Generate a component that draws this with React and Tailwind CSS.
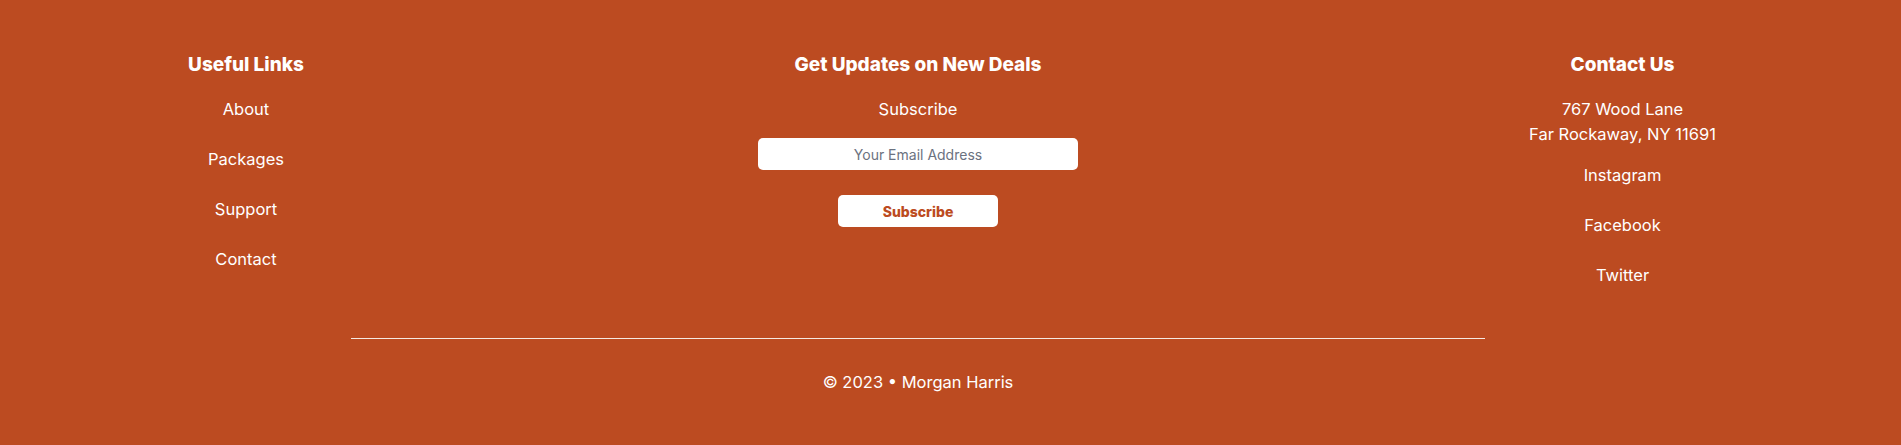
import React from "react";

const usefulLinks = ["About", "Packages", "Support", "Contact"];
const socialLinks = ["Instagram", "Facebook", "Twitter"];

export default function App() {
  return (
    <footer
      className="w-full min-h-[445px] bg-[#bc4b21] text-white pt-[50px] pb-[46px]"
      style={{ fontFamily: "Inter, 'Open Sans', sans-serif" }}
    >
      <div className="grid grid-cols-[492px_852px_557px]">
        {/* Useful links */}
        <div className="flex flex-col items-center">
          <h3 className="text-[19px] leading-[30px] font-extrabold">Useful Links</h3>
          <ul className="mt-[15px] flex flex-col items-center gap-[22px]">
            {usefulLinks.map((l) => (
              <li key={l} className="text-[16.5px] leading-[28px]">
                <a href="#">{l}</a>
              </li>
            ))}
          </ul>
        </div>

        {/* Newsletter */}
        <div className="flex flex-col items-center">
          <h3 className="text-[19px] leading-[30px] font-extrabold">Get Updates on New Deals</h3>
          <p className="mt-[15px] text-[16.5px] leading-[28px]">Subscribe</p>
          <input
            type="email"
            placeholder="Your Email Address"
            className="mt-[15px] h-[32px] w-[320px] rounded-[5px] bg-white text-center text-[14px] text-gray-700 placeholder:text-[#6b7280] outline-none"
          />
          <button className="mt-[25px] h-[32px] w-[160px] rounded-[5px] bg-white text-[14px] font-extrabold text-[#bc4b21]">
            Subscribe
          </button>
        </div>

        {/* Contact */}
        <div className="flex flex-col items-center">
          <h3 className="text-[19px] leading-[30px] font-extrabold">Contact Us</h3>
          <p className="mt-[17px] text-center text-[16.5px] leading-[25px]">
            767 Wood Lane
            <br />
            Far Rockaway, NY 11691
          </p>
          <ul className="mt-[14px] flex flex-col items-center gap-[22px]">
            {socialLinks.map((l) => (
              <li key={l} className="text-[16.5px] leading-[28px]">
                <a href="#">{l}</a>
              </li>
            ))}
          </ul>
        </div>
      </div>

      <div className="ml-[351px] w-[1134px]">
        <hr className="mt-[49px] border-0 border-t border-[#f6e9e2]" />
        <p className="mt-[29px] text-center text-[16.5px] leading-[28px]">© 2023 • Morgan Harris</p>
      </div>
    </footer>
  );
}
